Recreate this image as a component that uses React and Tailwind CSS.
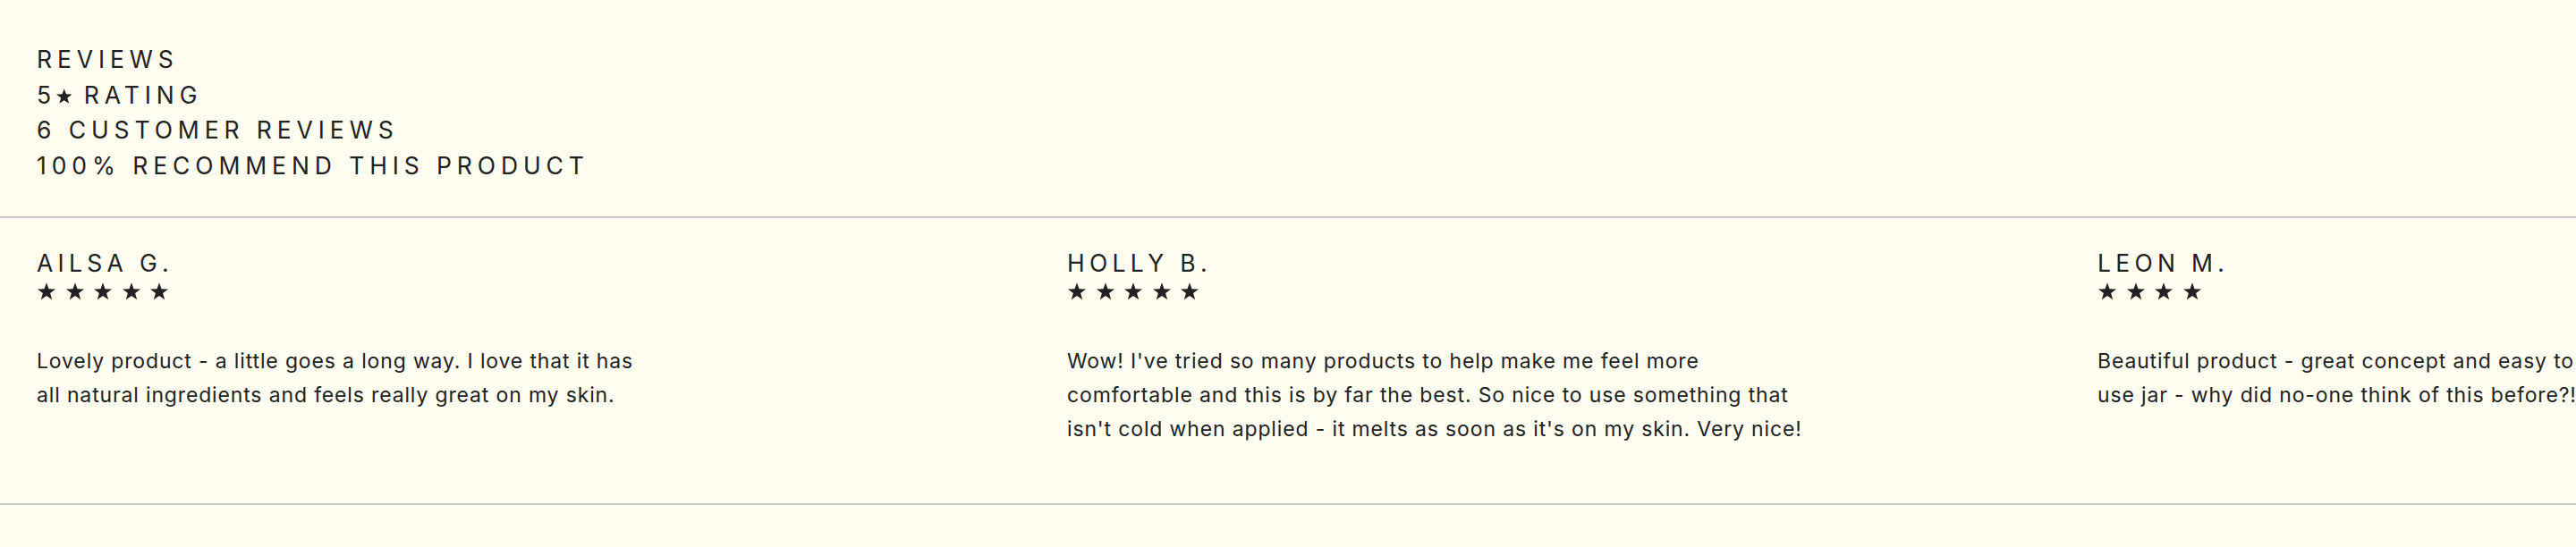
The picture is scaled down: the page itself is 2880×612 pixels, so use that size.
const reviews = [
    {
        name: 'Ailsa G.',
        rating: 5,
        body: 'Lovely product - a little goes a long way. I love that it has\nall natural ingredients and feels really great on my skin.',
    },
    {
        name: 'Holly B.',
        rating: 5,
        body: "Wow! I've tried so many products to help make me feel more\ncomfortable and this is by far the best. So nice to use something that\nisn't cold when applied - it melts as soon as it's on my skin. Very nice!",
    },
    {
        name: 'Leon M.',
        rating: 4,
        body: 'Beautiful product - great concept and easy to\nuse jar - why did no-one think of this before?!',
    },
];

function Star({ className }) {
    return (
        <svg viewBox="0 0 24 22.83" className={className} fill="currentColor" aria-hidden="true">
            <path d="M12 0L15.04 8.44L24 8.72L16.92 14.22L19.42 22.83L12 17.79L4.58 22.83L7.08 14.22L0 8.72L8.96 8.44Z" />
        </svg>
    );
}

function ReviewCard({ review }) {
    return (
        <div className="w-[1152px] shrink-0 pl-[41px] pt-[31px] pb-[64px]">
            <h3 className="text-[26.5px] leading-[39.5px] uppercase tracking-[5.3px]">
                {review.name}
            </h3>
            <div className="mt-px flex h-[19.4px] items-start gap-[11.5px] pl-px">
                {Array.from({ length: review.rating }).map((_, i) => (
                    <Star key={i} className="h-[19.4px] w-[20px]" />
                ))}
            </div>
            <p className="mt-[50px] whitespace-pre-line text-[23px] leading-[38px] tracking-[0.85px]">
                {review.body}
            </p>
        </div>
    );
}

export default function App() {
    return (
        <div className="h-[612px] w-full overflow-hidden bg-[#fffdf0] text-[#222222] font-['Inter',_'Liberation_Sans',_sans-serif]">
            {/* Summary */}
            <div className="px-[41px] pt-[47px] pb-[37px] text-[26.5px] leading-[39.5px] uppercase tracking-[5.9px]">
                <p>Reviews</p>
                <p>
                    5<Star className="inline-block h-[17px] w-[17.5px] align-baseline" /> Rating
                </p>
                <p>6 Customer Reviews</p>
                <p>100% Recommend This Product</p>
            </div>

            {/* Review slider */}
            <div className="flex border-y-2 border-[#c9c9c9]">
                {reviews.map((review) => (
                    <ReviewCard key={review.name} review={review} />
                ))}
            </div>
        </div>
    );
}
